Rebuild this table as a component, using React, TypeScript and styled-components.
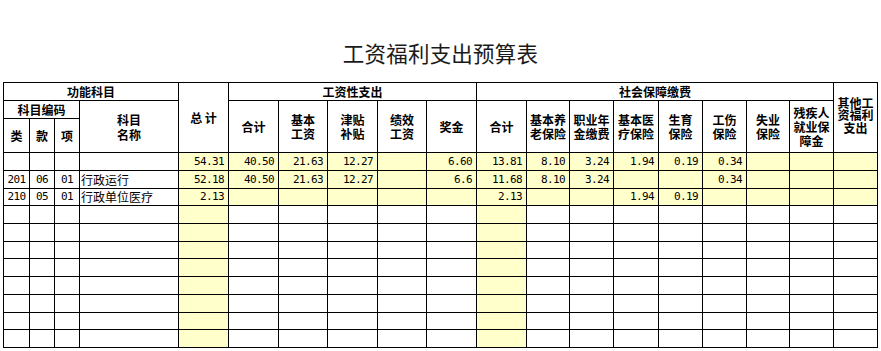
import React from 'react';
import styled, { createGlobalStyle } from 'styled-components';

const GlobalStyle = createGlobalStyle`
  body {
    margin: 0;
    background: #ffffff;
    font-family: "Noto Sans CJK SC", "DejaVu Sans", sans-serif;
    color: #000;
  }
`;

const Page = styled.div`
  width: 881px;
  height: 351px;
  overflow: hidden;
`;

const TitleBar = styled.div`
  height: 82px;
  box-sizing: border-box;
  padding-top: 24px;
  display: flex;
  align-items: center;
  justify-content: center;

  h1 {
    margin: 0;
    font-size: 21.5px;
    font-weight: 400;
    line-height: 30px;
    letter-spacing: 0.2px;
    color: #1a1a1a;
  }
`;

const Sheet = styled.table`
  margin-left: 3px;
  width: 875px;
  table-layout: fixed;
  border-collapse: collapse;
  border: 1px solid #000;
`;

const Row = styled.tr<{ $h: number }>`
  height: ${(p) => p.$h}px;
`;

const HeadCell = styled.th<{ $lh?: number; $lift?: number }>`
  border: 1px solid #000;
  padding: 0 0 ${(p) => p.$lift ?? 0}px 0;
  font-size: 12px;
  font-weight: 700;
  line-height: ${(p) => p.$lh ?? 14}px;
  text-align: center;
  vertical-align: middle;
  background: #ffffff;
  white-space: nowrap;
`;

const Cell = styled.td<{ $fill?: boolean; $align?: 'left' | 'center' | 'right'; $num?: boolean }>`
  border: 1px solid #000;
  padding: ${(p) => (p.$align === 'right' ? '0 4px 0 0' : p.$align === 'left' ? '0 0 0 1px' : '0')};
  background: ${(p) => (p.$fill ? '#ffffcc' : '#ffffff')};
  text-align: ${(p) => p.$align ?? 'center'};
  vertical-align: middle;
  white-space: nowrap;
  overflow: hidden;
  font-size: ${(p) => (p.$num ? '11px' : '12px')};
  letter-spacing: ${(p) => (p.$num ? '-0.6px' : '0')};
  font-family: ${(p) =>
    p.$num ? '"DejaVu Sans Mono", "Liberation Mono", monospace' : '"Noto Sans CJK SC", sans-serif'};
  line-height: 14px;
`;

const widths = [26, 25, 25, 99, 50, 50, 49, 50, 49, 50, 50, 43, 44, 45, 44, 44, 43, 44, 44];

interface BudgetRow {
  codes: string[];
  name: string;
  vals: string[];
}

const filled: BudgetRow[] = [
  {
    codes: ['', '', ''],
    name: '',
    vals: ['54.31', '40.50', '21.63', '12.27', '', '6.60', '13.81', '8.10', '3.24', '1.94', '0.19', '0.34', '', '', ''],
  },
  {
    codes: ['201', '06', '01'],
    name: '行政运行',
    vals: ['52.18', '40.50', '21.63', '12.27', '', '6.6', '11.68', '8.10', '3.24', '', '', '0.34', '', '', ''],
  },
  {
    codes: ['210', '05', '01'],
    name: '行政单位医疗',
    vals: ['2.13', '', '', '', '', '', '2.13', '', '', '1.94', '0.19', '', '', '', ''],
  },
];

const blankRows = 8;
const rowHeights = [18, 18, 17, 18, 18, 17, 18, 18, 18, 17, 18];

const wageHeads = ['合计', '基本\n工资', '津贴\n补贴', '绩效\n工资', '奖金'];
const socialHeads = ['合计', '基本养\n老保险', '职业年\n金缴费', '基本医\n疗保险', '生育\n保险', '工伤\n保险', '失业\n保险', '残疾人\n就业保\n障金'];

const lines = (text: string) =>
  text.split('\n').map((t, i, arr) => (
    <React.Fragment key={i}>
      {t}
      {i < arr.length - 1 && <br />}
    </React.Fragment>
  ));

const App: React.FC = () => {
  const empty: BudgetRow = { codes: ['', '', ''], name: '', vals: Array(15).fill('') };
  const body = [...filled, ...Array(blankRows).fill(empty)];

  return (
    <Page>
      <GlobalStyle />
      <TitleBar>
        <h1>工资福利支出预算表</h1>
      </TitleBar>
      <Sheet>
        <colgroup>
          {widths.map((w, i) => (
            <col key={i} style={{ width: w }} />
          ))}
        </colgroup>
        <thead>
          <Row $h={18}>
            <HeadCell colSpan={4}>功能科目</HeadCell>
            <HeadCell rowSpan={3}>总 计</HeadCell>
            <HeadCell colSpan={5}>工资性支出</HeadCell>
            <HeadCell colSpan={8}>社会保障缴费</HeadCell>
            <HeadCell rowSpan={3} $lh={12.5} $lift={4}>
              {lines('其他工\n资福利\n支出')}
            </HeadCell>
          </Row>
          <Row $h={18}>
            <HeadCell colSpan={3}>科目编码</HeadCell>
            <HeadCell rowSpan={2} $lh={15}>
              {lines('科目\n名称')}
            </HeadCell>
            {wageHeads.map((h, i) => (
              <HeadCell key={'w' + i} rowSpan={2}>
                {lines(h)}
              </HeadCell>
            ))}
            {socialHeads.map((h, i) => (
              <HeadCell key={'s' + i} rowSpan={2}>
                {lines(h)}
              </HeadCell>
            ))}
          </Row>
          <Row $h={34}>
            <HeadCell>类</HeadCell>
            <HeadCell>款</HeadCell>
            <HeadCell>项</HeadCell>
          </Row>
        </thead>
        <tbody>
          {body.map((r, ri) => {
            const isData = ri < filled.length;
            return (
              <Row key={ri} $h={rowHeights[ri]}>
                {r.codes.map((c, ci) => (
                  <Cell key={'c' + ci} $num>
                    {c}
                  </Cell>
                ))}
                <Cell $align="left">{r.name}</Cell>
                {r.vals.map((v, vi) => (
                  <Cell key={'v' + vi} $num $align="right" $fill={isData || vi === 0 || vi === 6}>
                    {v}
                  </Cell>
                ))}
              </Row>
            );
          })}
        </tbody>
      </Sheet>
    </Page>
  );
};

export default App;
